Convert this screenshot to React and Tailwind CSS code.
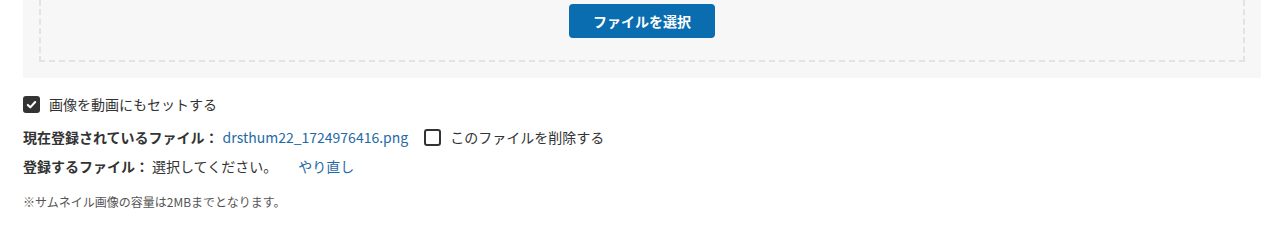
export default function App() {
  return (
    <div className="w-[1282px] h-[226px] bg-white text-[#333] font-['Noto_Sans_CJK_JP','Noto_Sans',sans-serif]">
      <div className="ml-[23px] mr-[21px] bg-[#f7f7f7] px-4 pb-4">
        <div className="flex justify-center border-x-2 border-b-2 border-dashed border-[#e3e3e3] pt-1 pb-[22px]">
          <button className="h-[34px] w-[146px] rounded bg-[#0a6db0] text-[14px] font-bold text-white">
            ファイルを選択
          </button>
        </div>
      </div>

      <div className="ml-[23px] mt-[18px] flex flex-col text-[14px]">
        <label className="flex h-[17px] items-center gap-[9px]">
          <span className="flex h-[17px] w-[17px] items-center justify-center rounded-[3px] bg-[#333]">
            <svg viewBox="0 0 16 16" className="h-[13px] w-[13px]" fill="none" stroke="white" strokeWidth="2.6" strokeLinecap="round" strokeLinejoin="round">
              <path d="M3.5 8.5l3 3 6-6.5" />
            </svg>
          </span>
          <span>画像を動画にもセットする</span>
        </label>

        <div className="mt-[16px] flex h-[17px] items-center">
          <span className="font-bold">現在登録されているファイル：</span>
          <span className="ml-[4px] text-[#1f6aa5]">drsthum22_1724976416.png</span>
          <span className="ml-[16px] h-[17px] w-[17px] rounded-[3px] border-2 border-[#333] bg-white"></span>
          <span className="ml-[9px]">このファイルを削除する</span>
        </div>

        <div className="mt-[12px] flex h-[17px] items-center">
          <span className="font-bold">登録するファイル：</span>
          <span className="ml-[3px]">選択してください。</span>
          <span className="ml-[21px] text-[#1f6aa5]">やり直し</span>
        </div>

        <p className="mt-[18px] text-[12px] text-[#555]">※サムネイル画像の容量は2MBまでとなります。</p>
      </div>
    </div>
  );
}
